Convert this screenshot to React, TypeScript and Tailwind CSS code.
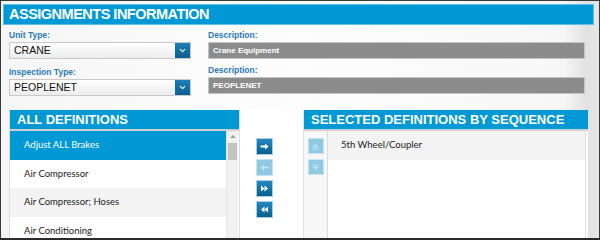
import { ChevronDown } from 'lucide-react';

const defs = ['Adjust ALL Brakes', 'Air Compressor', 'Air Compressor; Hoses', 'Air Conditioning'];

function Select({ value }: { value: string }) {
  return (
    <div className="flex h-[17px] w-[182px] border border-[#c9c9c9] bg-[linear-gradient(to_bottom,#ffffff,#ececec)]">
      <div className="flex-1 pl-[4px] text-[10.5px] leading-[15px] text-[#111]">{value}</div>
      <div className="flex w-[15px] items-center justify-center bg-[linear-gradient(to_bottom,#1a7fb5,#0a5f91)]">
        <ChevronDown className="h-[9px] w-[9px] text-white" strokeWidth={3} />
      </div>
    </div>
  );
}

function Field({ label, children }: { label: string; children: React.ReactNode }) {
  return (
    <div className="flex flex-col">
      <div className="h-[11px] text-[8.5px] font-bold leading-[9px] text-[#2b7ab8]">{label}</div>
      {children}
    </div>
  );
}

function Desc({ value }: { value: string }) {
  return (
    <div className="h-[17px] w-[377px] border border-[#c4c4c4] bg-[#8c8c8c] pl-[4px] text-[8px] font-bold leading-[15px] text-white">
      {value}
    </div>
  );
}

function MoveBtn({ kind, faded }: { kind: 'r' | 'l' | 'rr' | 'll'; faded?: boolean }) {
  return (
    <div
      className={
        faded
          ? 'flex h-[17px] w-[17px] items-center justify-center border border-[#c6e3f0] bg-[#8fc9e3]'
          : 'flex h-[17px] w-[17px] items-center justify-center border border-[#a9cfe2] bg-[linear-gradient(to_bottom,#2189c0,#0b5e8f)]'
      }
    >
      <svg width="9" height="9" viewBox="0 0 9 9" fill={faded ? '#c5e2ef' : '#fff'}>
        {kind === 'r' && <path d="M0.5 3.5h4.5v-2l3.5 3-3.5 3v-2h-4.5z" />}
        {kind === 'l' && <path d="M8.5 3.5h-4.5v-2l-3.5 3 3.5 3v-2h4.5z" />}
        {kind === 'rr' && <path d="M1 1.5l3.5 3-3.5 3zM4.5 1.5l3.5 3-3.5 3z" />}
        {kind === 'll' && <path d="M8 1.5l-3.5 3 3.5 3zM4.5 1.5l-3.5 3 3.5 3z" />}
      </svg>
    </div>
  );
}

function SeqBtn({ up }: { up?: boolean }) {
  return (
    <div className="flex h-[16px] w-[16px] items-center justify-center border border-[#c6e3f0] bg-[#8fc9e3]">
      <svg width="9" height="7" viewBox="0 0 9 7" fill="#c2e0ee">
        {up ? <path d="M1 4.5l3.5-3.5 3.5 3.5zM1 5.5h7v1h-7z" /> : <path d="M1 2.5l3.5 3.5 3.5-3.5zM1 0.5h7v1h-7z" />}
      </svg>
    </div>
  );
}

function PanelHeader({ title }: { title: string }) {
  return (
    <div className="h-[21px] border-b-2 border-[#cfcfcf] bg-[#0099d6] pl-[7px] text-[13px] font-bold leading-[20px] text-white">
      {title}
    </div>
  );
}

export default function App() {
  return (
    <div className="bg-white font-['Liberation_Sans',Arial,sans-serif]">
      <div className="h-[240px] w-[600px] overflow-hidden border-t border-l border-r border-b-2 border-t-[#3a3a3a] border-l-[#3a3a3a] border-r-[#3a3a3a] border-b-[#2a2a2a] bg-[linear-gradient(to_right,#f6f6f6_0%,#fdfdfd_50%,#f7f7f7_94%,#e1e1e1_98%,#e6e6e6_100%)] pl-[2px] pt-[3px]">
        <div className="h-[21px] w-[591px] border border-[#5cc0e9] bg-[#0099d6] pl-[5px] text-[14.5px] font-bold leading-[19px] tracking-[-0.5px] text-white">
          ASSIGNMENTS INFORMATION
        </div>

        <div className="mt-[6px] flex pl-[6px]">
          <div className="flex w-[199px] flex-col gap-[9px]">
            <Field label="Unit Type:">
              <Select value="CRANE" />
            </Field>
            <Field label="Inspection Type:">
              <Select value="PEOPLENET" />
            </Field>
          </div>
          <div className="flex flex-col gap-[7px]">
            <Field label="Description:">
              <Desc value="Crane Equipment" />
            </Field>
            <Field label="Description:">
              <Desc value="PEOPLENET" />
            </Field>
          </div>
        </div>

        <div className="mt-[14px] flex pl-[6px]">
          <div className="h-[130px] w-[231px] border-x border-[#dcdcdc] bg-white">
            <PanelHeader title="ALL DEFINITIONS" />
            <div className="flex pr-[1px]">
              <div className="flex flex-1 flex-col font-['Lato',sans-serif] text-[9.5px] text-[#222]">
                {defs.map((d, i) => (
                  <div
                    key={d}
                    className={
                      i === 0
                        ? 'h-[28.5px] bg-[#0099d6] pl-[14px] leading-[28px] text-white'
                        : i % 2 === 0
                          ? 'h-[28.5px] bg-[#f3f3f3] pl-[14px] leading-[28px]'
                          : 'h-[28.5px] bg-white pl-[14px] leading-[28px]'
                    }
                  >
                    {d}
                  </div>
                ))}
              </div>
              <div className="flex w-[12px] flex-col items-center border-l border-[#e4e4e4] bg-[#f1f1f1]">
                <div className="mt-[4px] h-0 w-0 border-x-[3px] border-b-[3px] border-x-transparent border-b-[#a0a0a0]" />
                <div className="mt-[5px] h-[17px] w-[9px] bg-[#c3c3c3]" />
              </div>
            </div>
          </div>

          <div className="flex w-[64px] flex-col items-start gap-[4px] border-r border-[#e2e2e2] bg-white pl-[16px] pt-[28px]">
            <MoveBtn kind="r" />
            <MoveBtn kind="l" faded />
            <MoveBtn kind="rr" />
            <MoveBtn kind="ll" />
          </div>

          <div className="h-[130px] w-[284px] bg-white">
            <PanelHeader title="SELECTED DEFINITIONS BY SEQUENCE" />
            <div className="flex h-full">
              <div className="flex w-[24px] flex-col items-center gap-[5px] border-r border-[#dcdcdc] bg-[#f7f7f7] pt-[7px]">
                <SeqBtn up />
                <SeqBtn />
              </div>
              <div className="w-[258px] border-r border-[#dcdcdc]">
                <div className="h-[28.5px] bg-[#f3f3f3] pl-[13px] font-['Lato',sans-serif] text-[9.5px] leading-[28px] text-[#222]">
                  5th Wheel/Coupler
                </div>
              </div>
            </div>
          </div>
        </div>
      </div>
    </div>
  );
}
